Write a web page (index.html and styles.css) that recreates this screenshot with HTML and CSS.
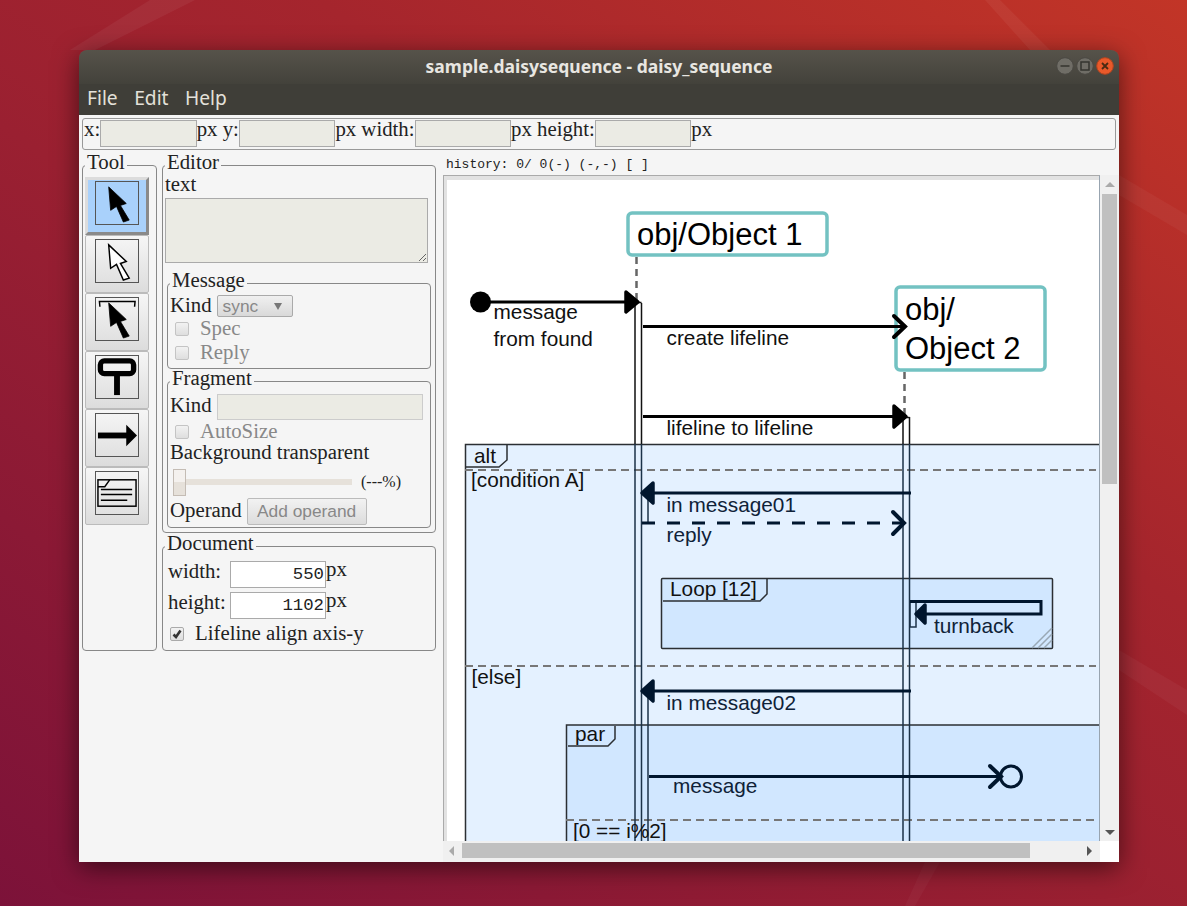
FILE: index.html
```html
<!DOCTYPE html>
<html lang="en">
<head>
    <meta charset="UTF-8">
    <title>sample.daisysequence - daisy_sequence</title>
    <link rel="stylesheet" href="styles.css">
</head>
<body>
    <!-- Wallpaper -->
    <svg class="wallpaper" viewBox="0 0 1187 906">
        <polygon points="150,0 195,0 95,50 70,50" fill="#fff" opacity="0.05"/>
        <polygon points="985,0 1000,0 1050,50 1030,50" fill="#fff" opacity="0.05"/>
        <polygon points="1119,175 1187,215 1187,235 1119,195" fill="#fff" opacity="0.04"/>
        <polygon points="1119,650 1187,690 1187,715 1119,670" fill="#fff" opacity="0.04"/>
        <polygon points="925,862 940,862 915,906 905,906" fill="#fff" opacity="0.03"/>
    </svg>

    <div class="window">
        <div class="titlebar">
            <span class="title">sample.daisysequence - daisy_sequence</span>
            <div class="wm-buttons">
                <svg width="18" height="18" viewBox="0 0 18 18"><circle class="wm-gray" cx="9" cy="9" r="8.3"/><path class="wm-glyph" d="M4.5 9h9"/></svg>
                <svg width="18" height="18" viewBox="0 0 18 18"><circle class="wm-gray" cx="9" cy="9" r="8.3"/><rect class="wm-glyph" x="5" y="5" width="8" height="8"/></svg>
                <svg width="18" height="18" viewBox="0 0 18 18"><circle class="wm-close" cx="9" cy="9" r="8.3"/><path class="wm-glyph-x" d="M6 6l6 6M12 6l-6 6"/></svg>
            </div>
        </div>
        <div class="menubar">
            <span>File</span>
            <span>Edit</span>
            <span>Help</span>
        </div>

        <div class="client">
            <!-- Position of the selected item -->
            <div class="posbar">
                <span>x:</span><input class="field" type="text" disabled>
                <span>px y:</span><input class="field" type="text" disabled>
                <span>px width:</span><input class="field" type="text" disabled>
                <span>px height:</span><input class="field" type="text" disabled>
                <span>px</span>
            </div>

            <div class="main">
                <fieldset class="tool">
                    <legend>Tool</legend>
                    <div class="tool-btn active">
                        <svg class="tool-icon" viewBox="0 0 43 43"><polygon class="arrow-fill" points="13,5 31,22 25,24 34,39 28,41 21,25 15,29"/></svg>
                    </div>
                    <div class="tool-btn">
                        <svg class="tool-icon" viewBox="0 0 43 43"><polygon points="13,5 31,22 25,24 34,39 28,41 21,25 15,29" fill="#fff" stroke="#000" stroke-width="1.5"/></svg>
                    </div>
                    <div class="tool-btn">
                        <svg class="tool-icon" viewBox="0 0 43 43"><polygon class="arrow-fill" points="13,5 31,22 25,24 34,39 28,41 21,25 15,29"/><path d="M4 9L3.5 3.5H40L39.5 9" fill="none" stroke="#000" stroke-width="1.5"/></svg>
                    </div>
                    <div class="tool-btn">
                        <svg class="tool-icon" viewBox="0 0 43 43"><rect x="4.5" y="5" width="34" height="13" rx="4" fill="none" stroke="#000" stroke-width="5.5"/><rect x="18.5" y="20" width="6" height="20"/></svg>
                    </div>
                    <div class="tool-btn">
                        <svg class="tool-icon" viewBox="0 0 43 43"><rect x="2" y="19" width="30" height="6"/><polygon points="31,11 42,22 31,33"/></svg>
                    </div>
                    <div class="tool-btn">
                        <svg class="tool-icon" viewBox="0 0 43 43"><rect x="2" y="8" width="39" height="27" fill="none" stroke="#000" stroke-width="1.5"/><path d="M2 15H9L14 8M5 18H37M5 23H37M5 29H32" fill="none" stroke="#000" stroke-width="1.5"/></svg>
                    </div>
                </fieldset>

                <div class="props">
                    <fieldset class="editor">
                        <legend>Editor</legend>
                        <label class="text-label">text</label>
                        <div class="textarea"><svg width="9" height="9" viewBox="0 0 9 9"><path d="M1 8L8 1M5 8L8 5" stroke="#666" fill="none"/></svg></div>

                        <fieldset class="sub message">
                            <legend>Message</legend>
                            <div class="row kind-row">
                                <span>Kind</span>
                                <div class="select"><span>sync</span><i class="caret"></i></div>
                            </div>
                            <div class="check muted"><i class="box"></i><span>Spec</span></div>
                            <div class="check muted"><i class="box"></i><span>Reply</span></div>
                        </fieldset>

                        <fieldset class="sub fragment">
                            <legend>Fragment</legend>
                            <div class="row frag-kind">
                                <span>Kind</span>
                                <input class="field wide" type="text" disabled>
                            </div>
                            <div class="check muted auto"><i class="box"></i><span>AutoSize</span></div>
                            <div class="bg-label">Background transparent</div>
                            <div class="slider">
                                <div class="track"><i class="thumb"></i></div>
                                <span class="percent">(---%)</span>
                            </div>
                            <div class="row operand">
                                <span>Operand</span>
                                <button class="add-btn" disabled>Add operand</button>
                            </div>
                        </fieldset>
                    </fieldset>

                    <fieldset class="document">
                        <legend>Document</legend>
                        <div class="row doc-row">
                            <span class="doc-label">width:</span>
                            <input class="num" type="text" value="550" disabled>
                            <span class="unit">px</span>
                        </div>
                        <div class="row doc-row">
                            <span class="doc-label">height:</span>
                            <input class="num" type="text" value="1102" disabled>
                            <span class="unit">px</span>
                        </div>
                        <div class="check doc-check">
                            <i class="box checked"><svg width="12" height="12" viewBox="0 0 12 12"><path d="M2.5 6.5L5 9L9.5 2.5" fill="none" stroke="#333" stroke-width="2.6"/></svg></i>
                            <span>Lifeline align axis-y</span>
                        </div>
                    </fieldset>
                </div>

                <div class="stage">
                    <div class="history">history: 0/ 0(-) (-,-) [ ]</div>
                    <div class="canvas-grid">
                        <div class="viewport">
                            <svg class="diagram" width="652" height="661" viewBox="447 180 652 661">
                                <!-- fragments -->
                                <rect class="frag" x="465.5" y="444.5" width="660" height="420"/>
                                <path class="frag-tab" d="M466 467H499L507 460V445"/>
                                <rect class="frag" x="661.5" y="578.5" width="391" height="70" rx="1"/>
                                <path class="frag-tab" d="M663 601H760L767 594V579"/>
                                <rect class="frag" x="566.5" y="725" width="560" height="140"/>
                                <path class="frag-tab" d="M568 746H608L615 739V726"/>
                                <path class="hatch" d="M1032 648L1052 628M1038 648L1052 634M1044 648L1052 640"/>
                                <path class="guard" d="M465 470H1096M465 666H1096M566 820H1099"/>

                                <!-- lifelines -->
                                <path class="dashed-life" d="M636.5 257V302M904.5 372V417"/>
                                <path class="life-top" d="M635 303V444M641.5 303V444M903 417V444M909.5 417V444"/>
                                <path class="life-top" d="M635 302.5H641.5M903 417.5H909.5"/>
                                <path class="life" d="M635 444V841M641.5 444V841M903 444V841M909.5 444V841M648 500V523M648 691V841"/>
                                <path class="life" d="M910 601.5V627H916V601.5"/>

                                <!-- heads -->
                                <rect class="head-box" x="628" y="213" width="199" height="42" rx="4"/>
                                <text class="big" x="637" y="245">obj/Object 1</text>
                                <rect class="head-box" x="896" y="287" width="149" height="83" rx="4"/>
                                <text class="big" x="905" y="320">obj/</text>
                                <text class="big" x="905" y="359">Object 2</text>

                                <!-- messages -->
                                <circle cx="480.5" cy="302" r="10.5" fill="#000"/>
                                <path class="msg" d="M490 302H632"/>
                                <polygon class="solid" points="626,292 638,302 626,312"/>
                                <text class="lbl" x="493.5" y="319">message</text>
                                <text class="lbl" x="493.5" y="346">from found</text>

                                <path class="msg" d="M643 326.5H903"/>
                                <path class="open" d="M894 316L905 326.5L894 337"/>
                                <text class="lbl" x="666.5" y="345">create lifeline</text>

                                <path class="msg" d="M643 416.5H900"/>
                                <polygon class="solid" points="894,406 906,416.5 894,427"/>
                                <text class="lbl" x="666.5" y="435">lifeline to lifeline</text>

                                <text class="lbl" x="474" y="463">alt</text>
                                <text class="lbl" x="471" y="487">[condition A]</text>

                                <path class="msg navy" d="M646 493H911"/>
                                <polygon class="solid navy-fill" points="653,483 642,493 653,503"/>
                                <text class="lbl navy-text" x="666.5" y="512">in message01</text>

                                <path class="msg navy dash" d="M642 523H905"/>
                                <path class="open navy" d="M893 512L904 523L893 534"/>
                                <text class="lbl navy-text" x="666.5" y="542">reply</text>

                                <text class="lbl" x="670" y="596">Loop [12]</text>
                                <path class="msg navy" d="M910 601.5H1041V614H920"/>
                                <polygon class="solid navy-fill" points="925,605 916,614 925,623"/>
                                <text class="lbl navy-text" x="934" y="633">turnback</text>

                                <text class="lbl" x="471.5" y="684">[else]</text>
                                <path class="msg navy" d="M646 691H911"/>
                                <polygon class="solid navy-fill" points="653,681 642,691 653,701"/>
                                <text class="lbl navy-text" x="666.5" y="710">in message02</text>

                                <text class="lbl" x="575" y="741">par</text>
                                <path class="msg navy" d="M649 776.5H1001"/>
                                <path class="open navy" d="M990 766L1001 776.5L990 787"/>
                                <circle class="lost" cx="1011" cy="776.5" r="10.5"/>
                                <text class="lbl navy-text" x="673" y="793">message</text>
                                <text class="lbl" x="573" y="838">[0 == i%2]</text>
                            </svg>
                        </div>
                        <div class="vscroll">
                            <i class="arrow up"></i>
                            <div class="vthumb"></div>
                            <i class="arrow down"></i>
                        </div>
                        <div class="hscroll">
                            <i class="arrow left"></i>
                            <div class="hthumb"></div>
                            <i class="arrow right"></i>
                        </div>
                        <div class="corner"></div>
                    </div>
                </div>
            </div>
        </div>
    </div>
</body>
</html>
```

FILE: styles.css
```css
/* Reset */
* {
    margin: 0;
    padding: 0;
    box-sizing: border-box;
}

body {
    width: 1187px;
    height: 906px;
    overflow: hidden;
    padding: 50px 0 0 79px;
    font-family: "Liberation Serif", serif;
    font-size: 20.8px;
    color: #222;
    background: linear-gradient(35deg, #7c1239 0%, #9a2031 45%, #a5252d 65%, #c23527 100%);
}

.wallpaper {
    position: absolute;
    left: 0;
    top: 0;
    width: 1187px;
    height: 906px;
}

/* Window */
.window {
    position: relative;
    width: 1040px;
    height: 812px;
    border-radius: 8px 8px 0 0;
    box-shadow: 0 6px 26px rgba(0, 0, 0, 0.55);
    overflow: hidden;
}

.titlebar {
    height: 34px;
    padding-bottom: 2px;
    display: flex;
    align-items: center;
    justify-content: center;
    position: relative;
    background: linear-gradient(#56534a, #43423b);
    color: #e8e6e1;
    font-family: "Noto Sans", sans-serif;
    font-weight: 700;
    font-size: 17.5px;
}

.wm-buttons {
    position: absolute;
    right: 5px;
    top: 7px;
    display: flex;
    gap: 2px;
}

.wm-gray {
    fill: #6f6d66;
    stroke: #4a4943;
}

.wm-close {
    fill: #e9592a;
    stroke: #b6451f;
}

.wm-glyph {
    fill: none;
    stroke: #35342f;
    stroke-width: 1.5;
}

.wm-glyph-x {
    fill: none;
    stroke: #4a2a12;
    stroke-width: 1.8;
}

.menubar {
    height: 31px;
    padding: 0 0 4px 8px;
    display: flex;
    align-items: center;
    gap: 16.5px;
    background: #3f3e38;
    color: #e4e1da;
    font-family: "Noto Sans", sans-serif;
    font-size: 19.2px;
}

.client {
    height: 747px;
    background: #f5f5f5;
    padding-top: 3px;
}

/* Position bar */
.posbar {
    height: 32px;
    margin: 0 3px;
    border: 1px solid #999;
    border-radius: 3px;
    display: flex;
    align-items: flex-start;
    padding: 1px 0 0 1px;
    line-height: 18px;
}

.field {
    width: 96.5px;
    height: 27px;
    background: #ebebe4;
    border: 1px solid #aaa;
}

.main {
    height: 712px;
    margin-top: 2px;
    display: flex;
    align-items: flex-start;
}

/* Fieldsets */
fieldset {
    border: 1px solid #888;
    border-radius: 4px;
    min-width: 0;
}

legend {
    padding: 0 2px 6px;
    line-height: 20px;
}

.tool {
    width: 75px;
    height: 499px;
    margin-left: 3px;
    padding: 0 0 0 2px;
}

.tool-btn {
    width: 64px;
    height: 58px;
    padding-top: 3px;
    display: flex;
    align-items: flex-start;
    justify-content: center;
    border: 1px solid #bbb;
    border-radius: 2px;
    background: linear-gradient(#f6f6f6, #dcdcdc);
}

.tool-btn.active {
    margin-top: -1px;
    padding-top: 1px;
    background: #a9d1fb;
    border-width: 3px;
    border-color: #dcdcdc #8a8a8a #8a8a8a #dcdcdc;
    border-radius: 0;
}

.tool-icon {
    width: 44px;
    height: 44px;
    border: 1px solid #555;
}

.arrow-fill {
    fill: #000;
    stroke: #000;
    stroke-width: 0.8;
}

.props {
    width: 274px;
    margin-left: 5px;
}

.editor {
    height: 381px;
    padding: 0 2px;
}

.text-label {
    display: block;
    line-height: 20px;
    margin-top: -4px;
}

.textarea {
    height: 65px;
    width: 263px;
    margin-top: 4px;
    background: #ebebe4;
    border: 1px solid #aaa;
    display: flex;
    align-items: flex-end;
    justify-content: flex-end;
}

.sub {
    width: 264px;
    margin: 7px 0 0 2px;
    padding: 0 2px;
}

.message {
    height: 99px;
}

.fragment {
    height: 160px;
    margin-top: -1px;
}

.row {
    display: flex;
    align-items: center;
}

.kind-row {
    height: 22px;
    margin-top: -1px;
}

.kind-row > span {
    margin-bottom: 3px;
}

.select {
    width: 76px;
    height: 22px;
    margin-left: 5px;
    padding: 0 10px 0 5px;
    display: flex;
    align-items: center;
    justify-content: space-between;
    border: 1px solid #aaa;
    border-radius: 2px;
    background: linear-gradient(#f0f0f0, #d9d9d9);
    color: #888;
    font-family: "Liberation Sans", sans-serif;
    font-size: 17.33px;
}

.caret {
    border-left: 4px solid transparent;
    border-right: 4px solid transparent;
    border-top: 7px solid #777;
}

.check {
    display: flex;
    align-items: center;
    height: 24px;
    padding-left: 5px;
    gap: 11px;
}

.check span {
    line-height: 18px;
    margin-top: -2px;
}

.muted {
    color: #888;
}

.box {
    width: 14px;
    height: 14px;
    border: 1px solid #c4c4c4;
    border-radius: 2px;
    background: linear-gradient(#f2f2f2, #dedede);
    display: flex;
    align-items: center;
    justify-content: center;
}

.box.checked {
    border-color: #aaa;
}

.frag-kind {
    height: 26px;
}

.frag-kind span {
    margin-bottom: 5px;
}

.wide {
    width: 206px;
    height: 26px;
    margin-left: 5px;
    border-color: #ccc;
}

.auto {
    height: 23px;
}

.bg-label {
    line-height: 18px;
}

.slider {
    display: flex;
    align-items: center;
    height: 29px;
    margin-left: 3px;
    margin-top: 6px;
}

.track {
    width: 179px;
    height: 6px;
    background: #e6e1da;
    position: relative;
}

.thumb {
    position: absolute;
    left: 0;
    top: -10px;
    width: 13px;
    height: 27px;
    border: 1px solid #c4bcb4;
    background: linear-gradient(#f4f1ee 50%, #e6e1da 50%);
}

.percent {
    margin-left: 9px;
    font-size: 16px;
}

.operand {
    height: 27px;
    margin-top: 2px;
    gap: 5px;
}

.operand span {
    margin-bottom: 4px;
}

.add-btn {
    width: 120px;
    height: 27px;
    border: 1px solid #bbb;
    border-radius: 2px;
    background: linear-gradient(#f2f2f2, #dcdcdc);
    color: #888;
    font-family: "Liberation Sans", sans-serif;
    font-size: 17.33px;
}

.document {
    height: 118px;
    padding: 0 2px;
}

.doc-row {
    height: 31px;
    margin-left: 3px;
}

.doc-label {
    width: 62px;
    margin-top: -8px;
}

.num {
    width: 96px;
    height: 27px;
    border: 1px solid #aaa;
    background: #fff;
    color: #222;
    text-align: right;
    padding-right: 1px;
    font-family: "Liberation Mono", monospace;
    font-size: 17.33px;
}

.unit {
    margin-top: -12px;
}

.doc-check {
    padding-left: 5px;
    height: 30px;
    margin-top: -2px;
}

/* Right side */
.stage {
    width: 676px;
    height: 707px;
    margin: 3px 0 0 7px;
}

.history {
    height: 20px;
    padding: 1px 0 0 3px;
    font-family: "Liberation Mono", monospace;
    font-size: 13px;
    line-height: 18px;
    color: #222;
}

.canvas-grid {
    height: 687px;
    display: grid;
    grid-template-columns: 657px 19px;
    grid-template-rows: 666px 21px;
}

.viewport {
    border-top: 1px solid #aaa;
    border-left: 1px solid #aaa;
    border-right: 1px solid #98a4b0;
    overflow: hidden;
    background: #fff;
}

.diagram {
    display: block;
    box-sizing: content-box;
    border-left: 3px solid #e2e2e2;
    border-top: 4px solid #e2e2e2;
    background: #fff;
}

/* Diagram */
.frag {
    fill: rgba(170, 210, 255, 0.32);
    stroke: #2b2f33;
    stroke-width: 1.5;
}

.frag-tab {
    fill: none;
    stroke: #2b2f33;
    stroke-width: 1.5;
}

.hatch {
    fill: none;
    stroke: #9aa8b5;
    stroke-width: 1.5;
}

.guard {
    fill: none;
    stroke: #777;
    stroke-width: 2;
    stroke-dasharray: 8 5;
}

.dashed-life {
    fill: none;
    stroke: #666;
    stroke-width: 2.5;
    stroke-dasharray: 7 5;
}

.life-top {
    fill: none;
    stroke: #111;
    stroke-width: 1.5;
}

.life {
    fill: none;
    stroke: #1b3248;
    stroke-width: 1.5;
}

.head-box {
    fill: #fff;
    stroke: #73c2c2;
    stroke-width: 3.5;
}

.big {
    font-family: "Liberation Sans", sans-serif;
    font-size: 31px;
    fill: #000;
}

.lbl {
    font-family: "Liberation Sans", sans-serif;
    font-size: 20.8px;
    fill: #111;
}

.navy-text {
    fill: #0f2238;
}

.msg {
    fill: none;
    stroke: #000;
    stroke-width: 3;
}

.msg.navy {
    stroke: #00162e;
}

.msg.dash {
    stroke-dasharray: 13 12;
}

.open {
    fill: none;
    stroke: #000;
    stroke-width: 4;
    stroke-linecap: round;
    stroke-linejoin: miter;
}

.open.navy {
    stroke: #00162e;
}

.solid {
    fill: #000;
    stroke: #000;
    stroke-width: 3.5;
    stroke-linejoin: round;
}

.solid.navy-fill {
    fill: #00162e;
    stroke: #00162e;
}

.lost {
    fill: none;
    stroke: #00162e;
    stroke-width: 3;
}

/* Scrollbars */
.vscroll,
.hscroll {
    position: relative;
    background: #f0f0f0;
}

.vthumb {
    position: absolute;
    left: 2px;
    top: 19px;
    width: 15px;
    height: 290px;
    background: #c0c0c0;
}

.hthumb {
    position: absolute;
    left: 19px;
    top: 2px;
    width: 568px;
    height: 15px;
    background: #c0c0c0;
}

.arrow {
    position: absolute;
    width: 0;
    height: 0;
}

.arrow.up {
    left: 5px;
    top: 7px;
    border-left: 5px solid transparent;
    border-right: 5px solid transparent;
    border-bottom: 5px solid #aaa;
}

.arrow.down {
    left: 5px;
    bottom: 6px;
    border-left: 5px solid transparent;
    border-right: 5px solid transparent;
    border-top: 5px solid #555;
}

.arrow.left {
    left: 6px;
    top: 5px;
    border-top: 5px solid transparent;
    border-bottom: 5px solid transparent;
    border-right: 5px solid #aaa;
}

.arrow.right {
    right: 8px;
    top: 5px;
    border-top: 5px solid transparent;
    border-bottom: 5px solid transparent;
    border-left: 5px solid #555;
}

.corner {
    background: #fff;
}
```
